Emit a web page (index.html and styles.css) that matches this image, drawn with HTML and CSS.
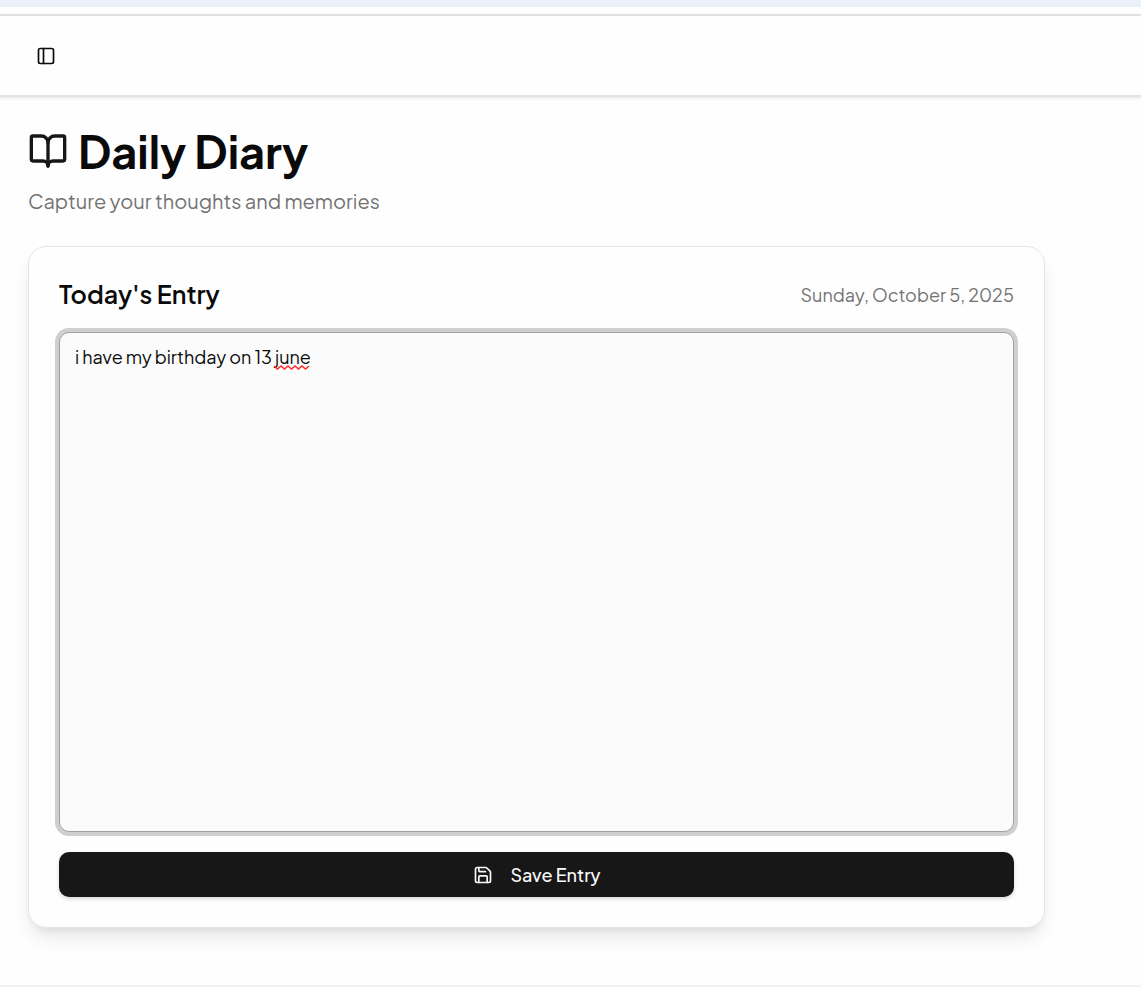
FILE: index.html
```html
<!DOCTYPE html>
<html lang="en">
<head>
<meta charset="utf-8">
<meta name="viewport" content="width=device-width, initial-scale=1">
<title>Daily Diary</title>
<link rel="stylesheet" href="styles.css">
</head>
<body>
<div class="top-strip"></div>
<header class="topbar">
  <button class="sidebar-toggle" type="button" aria-label="Toggle sidebar">
    <svg class="icon" viewBox="0 0 24 24" aria-hidden="true"><rect x="3" y="3" width="18" height="18" rx="2"/><path d="M9 3v18"/></svg>
  </button>
</header>
<main class="page">
  <div class="heading">
    <h1 class="title">
      <svg class="icon title-icon" viewBox="0 0 24 24" aria-hidden="true"><path d="M12 7v14"/><path d="M3 18a1 1 0 0 1-1-1V4a1 1 0 0 1 1-1h5a4 4 0 0 1 4 4 4 4 0 0 1 4-4h5a1 1 0 0 1 1 1v13a1 1 0 0 1-1 1h-6a3 3 0 0 0-3 3 3 3 0 0 0-3-3z"/></svg>
      <span>Daily Diary</span>
    </h1>
    <p class="subtitle">Capture your thoughts and memories</p>
  </div>
  <section class="card">
    <div class="card-head">
      <label class="card-title" for="entry">Today's Entry</label>
      <time class="date" datetime="2025-10-05">Sunday, October 5, 2025</time>
    </div>
    <div class="field">
      <textarea class="entry" id="entry" spellcheck="false">i have my birthday on 13 june</textarea>
      <svg class="squiggle" viewBox="0 0 36 5" aria-hidden="true"><path d="M0 1l3.500 3 3.500-3 3.500 3 3.500-3 3.500 3 3.500-3 3.500 3 3.500-3 3.500 3 3.500-3"/></svg>
    </div>
    <button class="save" type="button">
      <svg class="icon save-icon" viewBox="0 0 24 24" aria-hidden="true"><path d="M15.200 3a2 2 0 0 1 1.400.6l3.800 3.800a2 2 0 0 1 .6 1.400V19a2 2 0 0 1-2 2H5a2 2 0 0 1-2-2V5a2 2 0 0 1 2-2z"/><path d="M17 21v-7a1 1 0 0 0-1-1H8a1 1 0 0 0-1 1v7"/><path d="M7 3v4a1 1 0 0 0 1 1h7"/></svg>
      <span>Save Entry</span>
    </button>
  </section>
</main>
<footer class="footer"></footer>
</body>
</html>
```
FILE: styles.css
```css
* { box-sizing: border-box; }

body {
  margin: 0;
  min-height: 100vh;
  background: #fefefe;
  color: #0a0a0a;
  font-family: "Plus Jakarta Sans", Inter, sans-serif;
  overflow-x: hidden;
}

h1, p { margin: 0; }

.icon {
  display: block;
  flex: none;
  fill: none;
  stroke: currentColor;
  stroke-width: 2;
  stroke-linecap: round;
  stroke-linejoin: round;
}

.top-strip {
  height: 7px;
  background: #ebf0fa;
}

.topbar {
  display: flex;
  align-items: center;
  height: 83px;
  margin-top: 7px;
  padding: 0 28px;
  border-top: 2px solid #e1e1e1;
  border-bottom: 2px solid #e3e3e3;
  background: #fefefe;
  box-shadow: 0 1px 3px rgba(0, 0, 0, 0.1);
}

.sidebar-toggle {
  padding: 8px;
  border: 0;
  background: none;
  color: inherit;
}

.sidebar-toggle .icon {
  width: 20px;
  height: 20px;
}

.page {
  max-width: 1073px;
  padding: 28px 28px 57px;
}

.title {
  display: flex;
  align-items: center;
  gap: 10px;
  font-size: 45px;
  line-height: 52px;
  font-weight: 700;
  white-space: nowrap;
}

.title-icon {
  width: 40px;
  height: 40px;
  color: #171717;
}

.subtitle {
  margin-top: 10px;
  color: #737373;
  font-size: 20px;
  line-height: 28px;
}

.card {
  display: flex;
  flex-direction: column;
  margin-top: 31px;
  padding: 30px;
  border: 1px solid #e5e5e5;
  border-radius: 18px;
  background: #fefefe;
  box-shadow: 0 12px 19px -4px rgba(0, 0, 0, 0.1), 0 5px 8px -5px rgba(0, 0, 0, 0.1);
}

.card-head {
  display: flex;
  align-items: center;
  justify-content: space-between;
  height: 34px;
  margin-bottom: 21px;
}

.card-title {
  font-size: 25px;
  font-weight: 600;
}

.date {
  color: #737373;
  font-size: 18px;
}

.field {
  position: relative;
  display: flex;
}

.entry {
  flex: 1;
  height: 500px;
  padding: 10px 15px;
  border: 1px solid #a1a1a1;
  border-radius: 10px;
  outline: 0;
  background: #fbfbfb;
  box-shadow: 0 0 0 4px #cfcfcf;
  color: inherit;
  font: inherit;
  font-size: 18px;
  line-height: 28px;
  resize: none;
}

.squiggle {
  position: absolute;
  top: 33px;
  left: 215px;
  width: 36px;
  height: 5px;
  fill: none;
  stroke: #ff2a2a;
  stroke-width: 1.5;
}

.save {
  display: flex;
  align-items: center;
  justify-content: center;
  gap: 18px;
  height: 45px;
  margin-top: 20px;
  padding: 0;
  border: 0;
  border-radius: 10px;
  background: #171717;
  box-shadow: 0 2px 4px rgba(0, 0, 0, 0.15);
  color: #fafafa;
  font: inherit;
  font-size: 18px;
  font-weight: 500;
}

.save-icon {
  width: 20px;
  height: 20px;
}

.footer {
  border-top: 2px solid #f5f0f1;
}
```
